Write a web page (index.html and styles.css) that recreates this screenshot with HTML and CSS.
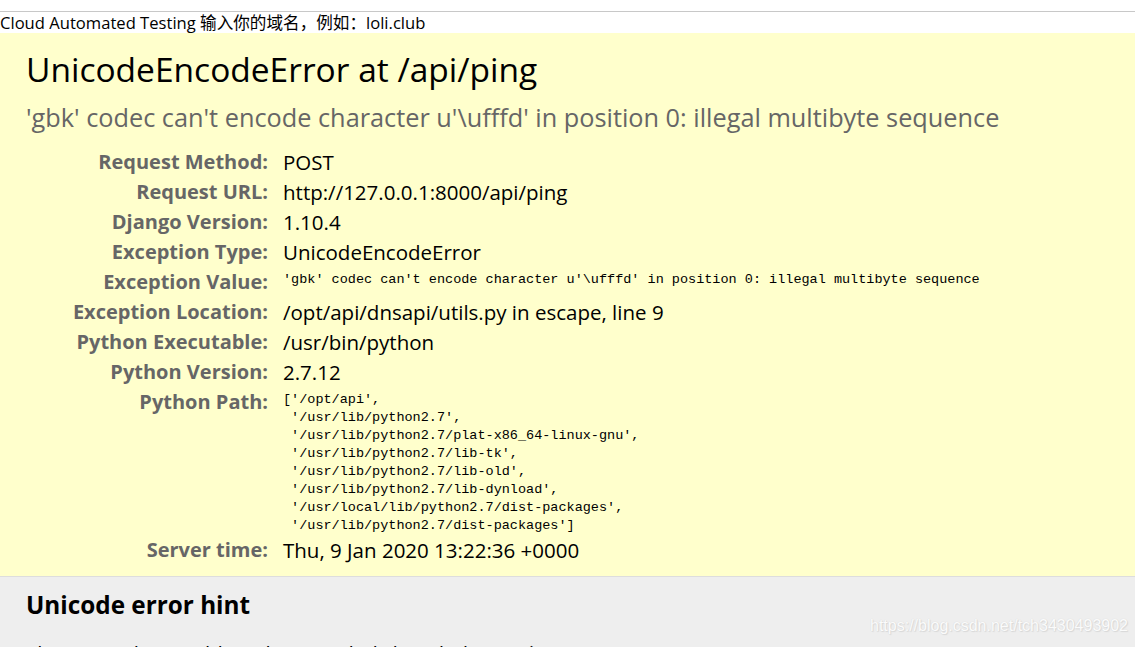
FILE: index.html
```html
<!DOCTYPE html>
<html>
<head>
<meta charset="utf-8">
<link rel="stylesheet" href="styles.css">
</head>
<body>
<div class="chrome"></div>
<div class="site">Cloud Automated Testing 输入你的域名，例如：loli.club</div>
<div class="summary">
  <h1 class="title">UnicodeEncodeError at /api/ping</h1>
  <h2 class="subtitle">'gbk' codec can't encode character u'\ufffd' in position 0: illegal multibyte sequence</h2>
  <table class="meta">
    <tr><th>Request Method:</th><td>POST</td></tr>
    <tr><th>Request URL:</th><td>http://127.0.0.1:8000/api/ping</td></tr>
    <tr><th>Django Version:</th><td>1.10.4</td></tr>
    <tr><th>Exception Type:</th><td>UnicodeEncodeError</td></tr>
    <tr><th>Exception Value:</th><td><pre class="mono">'gbk' codec can't encode character u'\ufffd' in position 0: illegal multibyte sequence</pre></td></tr>
    <tr><th>Exception Location:</th><td>/opt/api/dnsapi/utils.py in escape, line 9</td></tr>
    <tr><th>Python Executable:</th><td>/usr/bin/python</td></tr>
    <tr><th>Python Version:</th><td>2.7.12</td></tr>
    <tr><th>Python Path:</th><td><pre class="mono">['/opt/api',
 '/usr/lib/python2.7',
 '/usr/lib/python2.7/plat-x86_64-linux-gnu',
 '/usr/lib/python2.7/lib-tk',
 '/usr/lib/python2.7/lib-old',
 '/usr/lib/python2.7/lib-dynload',
 '/usr/local/lib/python2.7/dist-packages',
 '/usr/lib/python2.7/dist-packages']</pre></td></tr>
    <tr><th>Server time:</th><td>Thu, 9 Jan 2020 13:22:36 +0000</td></tr>
  </table>
</div>
<div class="hint">
  <h2 class="hint-title">Unicode error hint</h2>
  <p class="hint-text">The string that could not be encoded/decoded was: <strong>�</strong></p>
</div>
<div class="watermark">https://blog.csdn.net/tch3430493902</div>
</body>
</html>
```
FILE: styles.css
```css
html, body {
  margin: 0;
  padding: 0;
}
body {
  background: #eeeeee;
  font-family: "Open Sans", "Noto Sans CJK SC", sans-serif;
  color: #000;
  height: 647px;
  overflow: hidden;
  position: relative;
}
.chrome {
  height: 11px;
  background: #fff;
  border-bottom: 1px solid #c8c8c8;
}
.site {
  background: #fff;
  height: 21px;
  font-size: 16.6px;
  line-height: 21px;
  white-space: nowrap;
  font-family: "Open Sans", "Noto Sans CJK SC", sans-serif;
}
.summary {
  background: #ffffcc;
  border-bottom: 1px solid #dddddd;
  padding: 14px 26px 11px 26px;
}
.title {
  margin: 0;
  font-weight: normal;
  font-size: 33.5px;
  line-height: 44px;
}
.subtitle {
  margin: 8px 0 12px 0;
  font-weight: normal;
  color: #666;
  font-size: 25.3px;
  line-height: 36px;
}
.meta {
  border-collapse: collapse;
  border: none;
}
.meta th {
  text-align: right;
  vertical-align: top;
  color: #666;
  font-weight: bold;
  font-size: 20px;
  line-height: 30px;
  padding: 0 15px 0 0;
  width: 242px;
  white-space: nowrap;
}
.meta td {
  vertical-align: top;
  font-size: 20.5px;
  line-height: 30px;
  padding: 0;
  white-space: nowrap;
}
.mono {
  margin: 0;
  font-family: "Liberation Mono", monospace;
  font-size: 13.5px;
  line-height: 18px;
  padding-top: 4px;
}
.hint {
  padding: 11px 26px 14px 26px;
}
.hint-title {
  margin: 0 0 16px 0;
  font-size: 24.3px;
  line-height: 34px;
  font-weight: bold;
}
.hint-text {
  margin: 0;
  font-size: 20.5px;
  line-height: 30px;
}
.watermark {
  position: absolute;
  left: 870px;
  top: 617px;
  font-family: "Liberation Sans", sans-serif;
  font-size: 16px;
  color: #fbfbfb;
  text-shadow: 0 0 1px #d0d0d0, 1px 1px 1px #d8d8d8;
  white-space: nowrap;
}
```
